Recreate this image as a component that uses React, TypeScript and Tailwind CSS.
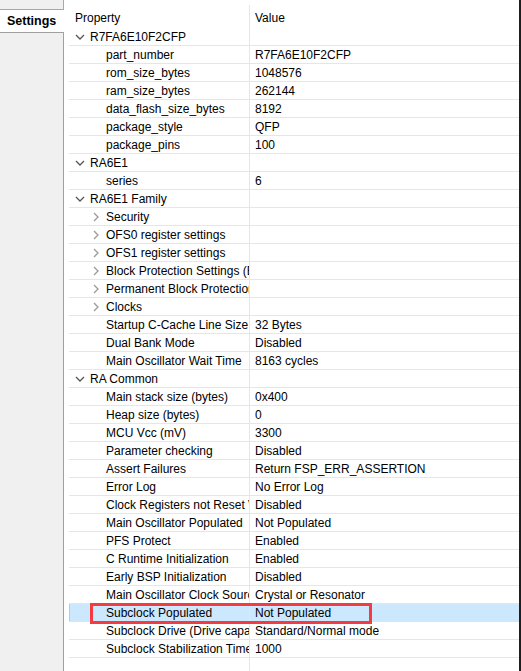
import React from 'react';

type Row = {
  label: string;
  value?: string;
  kind: 'group' | 'folder' | 'leaf';
};

const rows: Row[] = [
  { label: 'R7FA6E10F2CFP', kind: 'group' },
  { label: 'part_number', value: 'R7FA6E10F2CFP', kind: 'leaf' },
  { label: 'rom_size_bytes', value: '1048576', kind: 'leaf' },
  { label: 'ram_size_bytes', value: '262144', kind: 'leaf' },
  { label: 'data_flash_size_bytes', value: '8192', kind: 'leaf' },
  { label: 'package_style', value: 'QFP', kind: 'leaf' },
  { label: 'package_pins', value: '100', kind: 'leaf' },
  { label: 'RA6E1', kind: 'group' },
  { label: 'series', value: '6', kind: 'leaf' },
  { label: 'RA6E1 Family', kind: 'group' },
  { label: 'Security', kind: 'folder' },
  { label: 'OFS0 register settings', kind: 'folder' },
  { label: 'OFS1 register settings', kind: 'folder' },
  { label: 'Block Protection Settings (BPS)', kind: 'folder' },
  { label: 'Permanent Block Protection Settings (PBPS)', kind: 'folder' },
  { label: 'Clocks', kind: 'folder' },
  { label: 'Startup C-Cache Line Size', value: '32 Bytes', kind: 'leaf' },
  { label: 'Dual Bank Mode', value: 'Disabled', kind: 'leaf' },
  { label: 'Main Oscillator Wait Time', value: '8163 cycles', kind: 'leaf' },
  { label: 'RA Common', kind: 'group' },
  { label: 'Main stack size (bytes)', value: '0x400', kind: 'leaf' },
  { label: 'Heap size (bytes)', value: '0', kind: 'leaf' },
  { label: 'MCU Vcc (mV)', value: '3300', kind: 'leaf' },
  { label: 'Parameter checking', value: 'Disabled', kind: 'leaf' },
  { label: 'Assert Failures', value: 'Return FSP_ERR_ASSERTION', kind: 'leaf' },
  { label: 'Error Log', value: 'No Error Log', kind: 'leaf' },
  { label: 'Clock Registers not Reset Values during Startup', value: 'Disabled', kind: 'leaf' },
  { label: 'Main Oscillator Populated', value: 'Not Populated', kind: 'leaf' },
  { label: 'PFS Protect', value: 'Enabled', kind: 'leaf' },
  { label: 'C Runtime Initialization', value: 'Enabled', kind: 'leaf' },
  { label: 'Early BSP Initialization', value: 'Disabled', kind: 'leaf' },
  { label: 'Main Oscillator Clock Source', value: 'Crystal or Resonator', kind: 'leaf' },
  { label: 'Subclock Populated', value: 'Not Populated', kind: 'leaf' },
  { label: 'Subclock Drive (Drive capacity control)', value: 'Standard/Normal mode', kind: 'leaf' },
  { label: 'Subclock Stabilization Time (ms)', value: '1000', kind: 'leaf' },
];

const SELECTED = 'Subclock Populated';

function ChevronDown() {
  return (
    <svg width="10" height="6" viewBox="0 0 10 6" className="shrink-0">
      <path d="M1 1l4 4 4-4" fill="none" stroke="#555" strokeWidth="1.3" />
    </svg>
  );
}

function ChevronRight() {
  return (
    <svg width="6" height="10" viewBox="0 0 6 10" className="shrink-0">
      <path d="M1 1l4 4-4 4" fill="none" stroke="#9a9a9a" strokeWidth="1.3" />
    </svg>
  );
}

function PropertyRow({ row }: { row: Row }) {
  const selected = row.label === SELECTED;
  return (
    <div
      className={`grid grid-cols-[181px_1fr] h-[18px] border-b ${
        selected ? 'bg-[#cce8ff] border-[#cce8ff] shadow-[inset_1px_0_0_#99d1ff]' : 'border-[#e6e6e6]'
      }`}
    >
      <div className="flex items-center overflow-hidden whitespace-nowrap border-r border-[#e6e6e6] pt-px">
        {row.kind === 'group' && (
          <>
            <span className="ml-[6px] w-[15px] shrink-0 flex items-center">
              <ChevronDown />
            </span>
            <span className="shrink-0">{row.label}</span>
          </>
        )}
        {row.kind === 'folder' && (
          <>
            <span className="ml-[24px] w-[13px] shrink-0 flex items-center">
              <ChevronRight />
            </span>
            <span className="shrink-0">{row.label}</span>
          </>
        )}
        {row.kind === 'leaf' && <span className="ml-[37px] shrink-0">{row.label}</span>}
      </div>
      <div className="flex items-center pl-[5px] pt-px overflow-hidden whitespace-nowrap">{row.value}</div>
    </div>
  );
}

export default function App() {
  return (
    <div
      className="relative flex w-[521px] h-[671px] bg-white text-[12px] leading-[18px] text-black overflow-hidden"
      style={{ fontFamily: '"Liberation Sans", Arial, sans-serif' }}
    >
      {/* left tab strip */}
      <div className="w-[64px] flex flex-col bg-[#f0f0f0]">
        <div className="h-[10px] border-r border-b border-[#a8a8a8]" />
        <div className="h-[22px] bg-white flex items-center pl-[7px] font-bold text-[12.5px]">Settings</div>
        <div className="flex-1 border-r border-t border-[#a0a0a0]" />
      </div>

      {/* property table */}
      <div className="flex-1 flex flex-col pl-[5px] border-r-2 border-[#1e1e1e]">
        <div className="grid grid-cols-[181px_1fr] h-[28px]">
          <div className="pl-[6px] pt-[9px]">Property</div>
          <div className="pl-[5px] pt-[4px] border-l border-[#e6e6e6] mt-[5px] -ml-px">Value</div>
        </div>
        {rows.map((r) => (
          <PropertyRow key={r.label} row={r} />
        ))}
        <div className="flex-1 grid grid-cols-[181px_1fr]">
          <div className="border-r border-[#e6e6e6]" />
          <div />
        </div>
      </div>

      {/* annotation box */}
      <div className="absolute left-[90px] top-[603px] w-[282px] h-[21px] border-[3px] border-[#f23c42] pointer-events-none" />
    </div>
  );
}
